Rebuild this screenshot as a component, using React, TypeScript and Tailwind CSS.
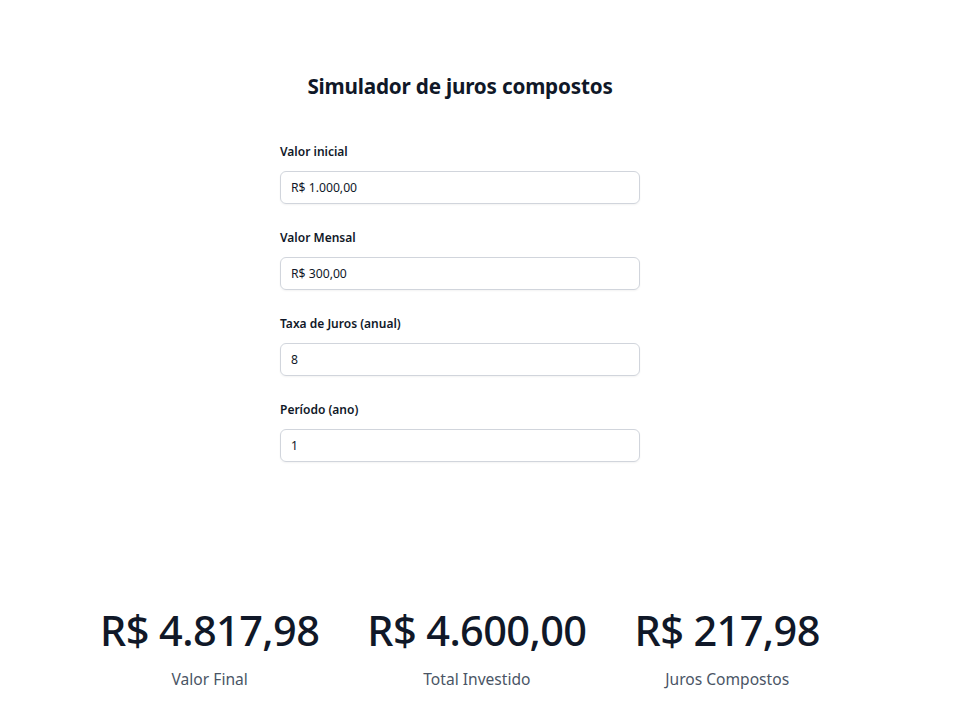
import { useState } from "react";

const fields = [
  { label: "Valor inicial", value: "R$ 1.000,00" },
  { label: "Valor Mensal", value: "R$ 300,00" },
  { label: "Taxa de Juros (anual)", value: "8" },
  { label: "Período (ano)", value: "1" },
];

const results = [
  { value: "R$ 4.817,98", label: "Valor Final" },
  { value: "R$ 4.600,00", label: "Total Investido" },
  { value: "R$ 217,98", label: "Juros Compostos" },
];

export default function App() {
  const [values, setValues] = useState(fields.map((f) => f.value));

  return (
    <div
      className="min-h-screen bg-white text-gray-900"
      style={{ fontFamily: '"Noto Sans", "Open Sans", sans-serif' }}
    >
      <div className="flex w-[920px] flex-col items-center pt-[72px]">
        <h1 className="text-[20.7px] font-bold leading-7 tracking-[-0.2px]">
          Simulador de juros compostos
        </h1>

        <form className="mt-[42px] flex w-[360px] flex-col gap-6">
          {fields.map((field, i) => (
            <label key={field.label} className="flex flex-col gap-[9px]">
              <span className="text-[12px] font-semibold leading-5">
                {field.label}
              </span>
              <input
                className="h-[33px] w-full rounded-md border border-gray-300 px-[10px] text-[12.2px] text-gray-900 shadow-xs outline-none"
                value={values[i]}
                onChange={(e) => {
                  const next = [...values];
                  next[i] = e.target.value;
                  setValues(next);
                }}
              />
            </label>
          ))}
        </form>

        <div className="mt-[144px] flex gap-12">
          {results.map((r) => (
            <div key={r.label} className="flex flex-col items-center">
              <span className="text-[41.5px] font-medium leading-[48px] tracking-[-0.6px]">
                {r.value}
              </span>
              <span className="mt-[13px] text-[15.6px] leading-6 text-gray-600">
                {r.label}
              </span>
            </div>
          ))}
        </div>
      </div>
    </div>
  );
}
